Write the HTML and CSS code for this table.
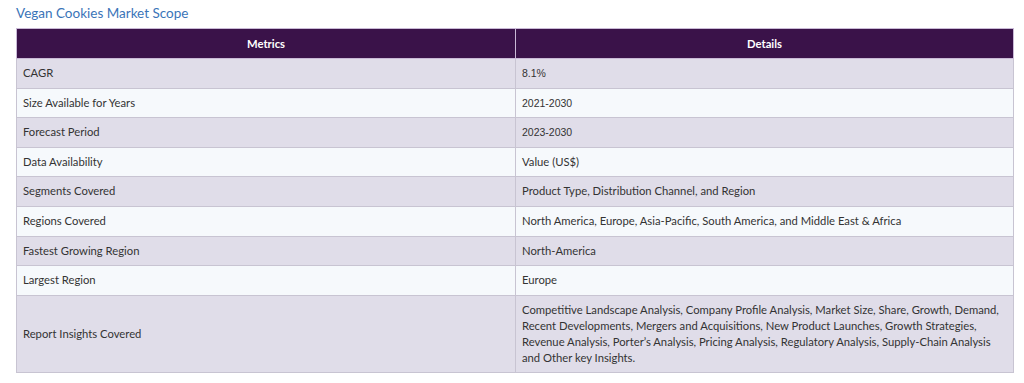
FILE: index.html
```html
<!DOCTYPE html>
<html>
<head>
<meta charset="utf-8">
<link rel="stylesheet" href="styles.css">
</head>
<body>
<div class="page">
  <h3 class="title">Vegan Cookies Market Scope</h3>
  <table class="scope">
    <thead>
      <tr><th class="c1">Metrics</th><th>Details</th></tr>
    </thead>
    <tbody>
      <tr><td>CAGR</td><td class="num">8.1%</td></tr>
      <tr><td>Size Available for Years</td><td class="num">2021-2030</td></tr>
      <tr><td>Forecast Period</td><td class="num">2023-2030</td></tr>
      <tr><td>Data Availability</td><td>Value (US$)</td></tr>
      <tr><td>Segments Covered</td><td>Product Type, Distribution Channel, and Region</td></tr>
      <tr><td>Regions Covered</td><td>North America, Europe, Asia-Pacific, South America, and Middle East &amp; Africa</td></tr>
      <tr><td>Fastest Growing Region</td><td>North-America</td></tr>
      <tr><td>Largest Region</td><td>Europe</td></tr>
      <tr class="tall"><td>Report Insights Covered</td><td>Competitive Landscape Analysis, Company Profile Analysis, Market Size, Share, Growth, Demand, Recent Developments, Mergers and Acquisitions, New Product Launches, Growth Strategies, Revenue Analysis, Porter’s Analysis, Pricing Analysis, Regulatory Analysis, Supply-Chain Analysis and Other key Insights.</td></tr>
    </tbody>
  </table>
</div>
</body>
</html>
```
FILE: styles.css
```css
html, body {
  margin: 0;
  padding: 0;
  background: #ffffff;
}
.page {
  padding: 4px 10px 0 16px;
  font-family: Lato, "Open Sans", sans-serif;
  color: #333333;
}
.title {
  margin: 0 0 6px 0;
  font-size: 13.5px;
  line-height: 18px;
  font-weight: 400;
  color: #3a74b8;
}
.scope {
  width: 998px;
  border-collapse: collapse;
  font-size: 11.25px;
  table-layout: fixed;
}
.scope th {
  background: #3a1249;
  color: #ffffff;
  font-weight: 700;
  text-align: center;
  height: 29px;
  padding: 0 6px;
  border: 1px solid #c9b9d6;
}
.scope th.c1 {
  width: 486px;
}
.scope td {
  padding: 6px;
  line-height: 16.6px;
  border: 1px solid #c8c4d2;
  vertical-align: middle;
  text-align: left;
}
.scope tbody tr:nth-child(odd) td {
  background: #e0dde9;
}
.scope tbody tr:nth-child(even) td {
  background: #f6f9fc;
}
.scope td.num {
  font-family: "Liberation Sans", Arial, sans-serif;
  font-size: 10.5px;
}
.scope tr.tall td {
  padding-top: 6px;
  padding-bottom: 6px;
  line-height: 16px;
}
```
